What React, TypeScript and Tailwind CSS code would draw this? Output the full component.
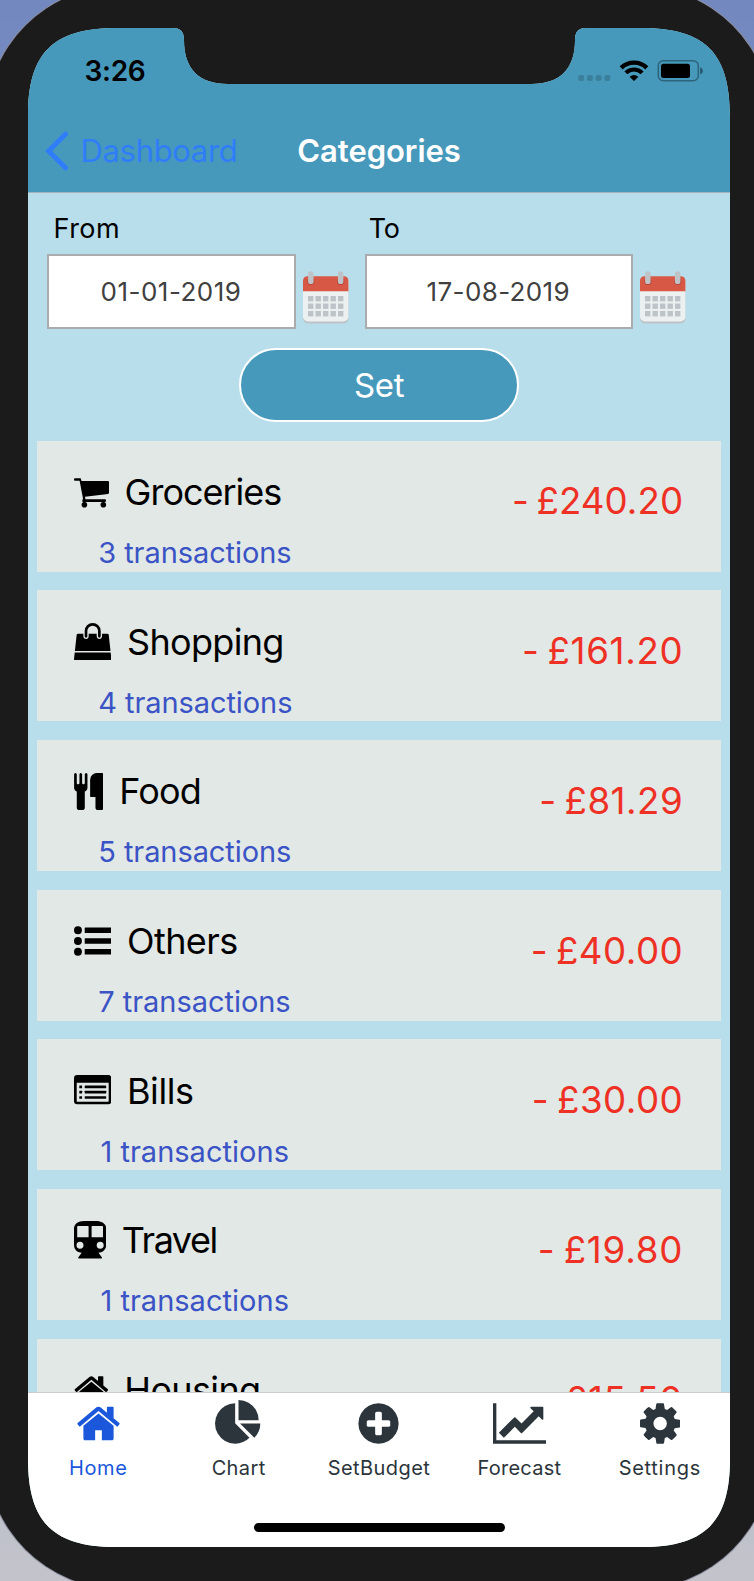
import type { ReactNode } from "react";

function CartIcon() {
  return (
    <svg className="h-[44px] w-[35px] shrink-0" viewBox="0 0 35 44" fill="currentColor">
      <path d="M1 8.3H6.6L7.6 11H34Q35 11 35 12V22.8Q35 23.8 34 23.9L11 26.7L11.4 29.3H31Q32 29.3 32 30.7Q32 32 31 32H9.4Q8.2 32 8.2 31L9 28.6L5.6 10.7H1Q0 10.7 0 9.5Q0 8.3 1 8.3Z" />
      <path d="M9.4 31h2v3h-2zM28.4 31h2v3h-2z" />
      <circle cx="10.4" cy="34.7" r="2.8" />
      <circle cx="29.3" cy="34.7" r="2.8" />
    </svg>
  );
}

function BagIcon() {
  return (
    <svg className="h-[37.4px] w-[37.4px] shrink-0" viewBox="0 0 1792 1792" fill="currentColor">
      <path d="M1757 1408l35 313q3 28-16 50-19 21-48 21h-1664q-29 0-48-21-19-22-16-50l35-313h1722zm-93-839l86 775h-1708l86-775q3-24 21-40.500t43-16.500h256v128q0 53 37.500 90.500t90.500 37.500 90.500-37.500 37.500-90.500v-128h384v128q0 53 37.500 90.500t90.500 37.500 90.500-37.500 37.500-90.500v-128h256q25 0 43 16.500t21 40.500zm-384-185v256q0 26-19 45t-45 19-45-19-19-45v-256q0-106-75-181t-181-75-181 75-75 181v256q0 26-19 45t-45 19-45-19-19-45v-256q0-159 112.500-271.500t271.500-112.500 271.500 112.500 112.500 271.500z" />
    </svg>
  );
}

function CutleryIcon() {
  return (
    <svg className="h-[37.4px] w-[29.6px] shrink-0" viewBox="192 64 1408 1792" fill="currentColor">
      <path d="M832 128v640q0 61-35.500 111t-92.500 70v779q0 52-38 90t-90 38h-128q-52 0-90-38t-38-90v-779q-57-20-92.500-70t-35.500-111v-640q0-26 19-45t45-19 45 19 19 45v416q0 26 19 45t45 19 45-19 19-45v-416q0-26 19-45t45-19 45 19 19 45v416q0 26 19 45t45 19 45-19 19-45v-416q0-26 19-45t45-19 45 19 19 45zm768 0v1600q0 52-38 90t-90 38h-128q-52 0-90-38t-38-90v-512h-224q-13 0-22.500-9.500t-9.500-22.500v-800q0-132 94-226t226-94h256q26 0 45 19t19 45z" />
    </svg>
  );
}

function ListIcon() {
  return (
    <svg className="h-[44px] w-[37.4px] shrink-0" viewBox="0 0 37.4 44" fill="currentColor">
      {[11.3, 22, 32.7].map((y) => (
        <g key={y}>
          <circle cx="3.95" cy={y} r="3.95" />
          <rect x="10.7" y={y - 2.8} width="26.7" height="5.6" rx="0.6" />
        </g>
      ))}
    </svg>
  );
}

function BillsIcon() {
  return (
    <svg className="h-[44px] w-[37.4px] shrink-0" viewBox="0 0 37.4 44" fill="currentColor">
      <path
        fillRule="evenodd"
        d="M3.3 6H34.1Q37.4 6 37.4 9.3V32Q37.4 35.3 34.1 35.3H3.3Q0 35.3 0 32V9.3Q0 6 3.3 6ZM2.7 13.7V32Q2.7 32.7 3.4 32.7H34Q34.7 32.7 34.7 32V13.7Z"
      />
      {[17.8, 23.1, 28.5].map((y) => (
        <g key={y}>
          <rect x="5.3" y={y - 1.35} width="2.8" height="2.7" rx="0.5" />
          <rect x="10.7" y={y - 1.35} width="21.5" height="2.7" rx="0.5" />
        </g>
      ))}
    </svg>
  );
}

function TrainIcon() {
  return (
    <svg className="h-[44px] w-[32.2px] shrink-0" viewBox="0 0 32.2 44" fill="currentColor">
      <path
        fillRule="evenodd"
        d="M10 3H22.2C28 3 32.2 6 32.2 10.5V27C32.2 31.5 29 34.5 24.5 34.8L28 39.4Q28.3 40.6 27.2 40.6H5Q3.9 40.6 4.2 39.4L7.7 34.8C3.2 34.5 0 31.5 0 27V10.5C0 6 4.2 3 10 3ZM3.8 8Q3.2 8 3.2 8.6V18.7Q3.2 19.3 3.8 19.3H14Q14.6 19.3 14.6 18.7V8.6Q14.6 8 14 8ZM18.2 8Q17.6 8 17.6 8.6V18.7Q17.6 19.3 18.2 19.3H28.4Q29 19.3 29 18.7V8.6Q29 8 28.4 8ZM6 23.8A3.5 3.5 0 1 0 6 30.8A3.5 3.5 0 1 0 6 23.8ZM26.2 23.8A3.5 3.5 0 1 0 26.2 30.8A3.5 3.5 0 1 0 26.2 23.8Z"
      />
    </svg>
  );
}

const HOME_PATH =
  "M1472 992v480q0 26-19 45t-45 19h-384v-384h-256v384h-384q-26 0-45-19t-19-45v-480q0-1 .5-3t.5-3l575-474 575 474q1 2 1 6zm223-69l-62 74q-8 9-21 11h-3q-13 0-21-7l-692-577-692 577q-12 8-24 7-13-2-21-11l-62-74q-8-10-7-23.500t11-21.500l719-599q32-26 76-26t76 26l244 204v-195q0-14 9-23t23-9h192q14 0 23 9t9 23v408l219 182q10 8 11 21.500t-7 23.500z";
const PIE_PATH =
  "M768 890l546 546q-106 108-247.500 168t-298.500 60q-209 0-385.500-103t-279.500-279.500-103-385.500 103-385.500 279.500-279.500 385.500-103v762zm187 6h773q0 157-60 298.500t-168 247.500zm709-128h-768v-768q209 0 385.500 103t279.500 279.500 103 385.500z";
const PLUS_PATH =
  "M1344 960v-128q0-26-19-45t-45-19h-256v-256q0-26-19-45t-45-19h-128q-26 0-45 19t-19 45v256h-256q-26 0-45 19t-19 45v128q0 26 19 45t45 19h256v256q0 26 19 45t45 19h128q26 0 45-19t19-45v-256h256q26 0 45-19t19-45zm320-64q0 209-103 385.500t-279.500 279.500-385.500 103-385.500-103-279.500-279.500-103-385.500 103-385.500 279.500-279.500 385.500-103 385.500 103 279.500 279.500 103 385.500z";
const LINE_PATH =
  "M2048 1536v128h-2048v-1536h128v1408h1920zm-128-1248v435q0 21-19.500 29.500t-35.500-7.500l-121-121-633 633q-10 10-23 10t-23-10l-233-233-416 416-192-192 585-585q10-10 23-10t23 10l233 233 464-464-121-121q-16-16-7.500-35.500t29.500-19.500h435q14 0 23 9t9 23z";
const COG_PATH =
  "M1024 896q0-106-75-181t-181-75-181 75-75 181 75 181 181 75 181-75 75-181zm512-109v222q0 12-8 23t-20 13l-185 28q-19 54-39 91 35 50 107 138 10 12 10 25t-9 23q-27 37-99 108t-94 71q-12 0-26-9l-138-108q-44 23-91 38-16 136-29 186-7 28-36 28h-222q-14 0-24.500-8.500t-11.500-21.500l-28-184q-49-16-90-37l-141 107q-10 9-25 9-14 0-25-11-126-114-165-168-7-10-7-23 0-12 8-23 15-21 51-66.500t54-70.500q-27-50-41-99l-183-27q-13-2-21-12.500t-8-23.500v-222q0-12 8-23t19-13l186-28q14-46 39-92-40-57-107-138-10-12-10-24 0-10 9-23 26-36 98.500-107.500t94.500-71.500q13 0 26 10l138 107q44-23 91-38 16-136 29-186 7-28 36-28h222q14 0 24.500 8.500t11.500 21.500l28 184q49 16 90 37l142-107q9-9 24-9 13 0 25 10 129 119 165 170 7 8 7 22 0 12-8 23-15 21-51 66.500t-54 70.500q26 50 41 98l183 28q13 2 21 12.500t8 23.500z";

function HouseIcon() {
  return (
    <svg className="h-[37.4px] w-[34.7px] shrink-0" viewBox="64 0 1664 1792" fill="currentColor">
      <path d={HOME_PATH} />
    </svg>
  );
}

function CalendarIcon() {
  return (
    <svg className="h-[53px] w-[46px]" viewBox="0 0 46 53">
      <rect x="0" y="9" width="45.4" height="43.5" rx="5" fill="#bdc3c7" />
      <rect x="0" y="7" width="45.4" height="43.5" rx="5" fill="#ecf0f1" />
      <path d="M0 20.3V10Q0 5.3 4.7 5.3H40.7Q45.4 5.3 45.4 10V20.3Z" fill="#d75945" />
      <circle cx="8" cy="10.5" r="3.6" fill="#b84436" />
      <circle cx="37.7" cy="10.5" r="3.6" fill="#b84436" />
      <rect x="5.1" y="0.3" width="5.5" height="12.8" rx="2.7" fill="#bdc3c7" />
      <rect x="34.9" y="0.3" width="5.5" height="12.8" rx="2.7" fill="#bdc3c7" />
      {[25, 32.5, 40].map((y) =>
        [5, 12.5, 20, 27.5, 35].map((x) => (
          <rect key={`${x}-${y}`} x={x} y={y} width="5.4" height="5.4" fill="#bdc3c7" />
        )),
      )}
    </svg>
  );
}

function StatusIcons() {
  return (
    <svg className="h-[22px] w-[126px]" viewBox="0 0 126 22">
      {[0.3, 9, 17.7, 26.5].map((x) => (
        <rect key={x} x={x} y="15" width="5.8" height="6" rx="1.8" fill="#3a7f9b" />
      ))}
      <g fill="none" stroke="#000">
        <path d="M43.2 7.9A18.2 18.2 0 0 1 68.8 7.9" strokeWidth="4.4" />
        <path d="M47.9 12.9A11.3 11.3 0 0 1 64.1 12.9" strokeWidth="4.2" />
      </g>
      <path d="M51.6 16.8Q56 13 60.4 16.8L56.6 20.5Q56 21 55.4 20.5Z" />
      <rect x="80.3" y="0.8" width="40" height="20" rx="5" fill="none" stroke="#2d647b" strokeWidth="1.5" />
      <rect x="83" y="3.8" width="29" height="14.2" rx="2.5" />
      <path d="M122.2 7.2C125.6 8.7 125.6 13 122.2 14.5Z" fill="#25546a" />
    </svg>
  );
}

type Category = {
  name: string;
  nameStyle: string;
  count?: number;
  countStyle?: string;
  amount: string;
  amountStyle: string;
  icon: ReactNode;
};

const categories: Category[] = [
  { name: "Groceries", nameStyle: "tracking-[-1.01px]", count: 3, countStyle: "pl-[24.7px] tracking-[-0.08px]", amount: "- £240.20", amountStyle: "tracking-[0.08px]", icon: <CartIcon /> },
  { name: "Shopping", nameStyle: "tracking-[-0.68px]", count: 4, countStyle: "pl-[24.7px] tracking-[-0.08px]", amount: "- £161.20", amountStyle: "tracking-[0.65px]", icon: <BagIcon /> },
  { name: "Food", nameStyle: "tracking-[-0.8px]", count: 5, countStyle: "pl-[24.7px] tracking-[-0.08px]", amount: "- £81.29", amountStyle: "tracking-[0.5px]", icon: <CutleryIcon /> },
  { name: "Others", nameStyle: "tracking-[-0.57px]", count: 7, countStyle: "pl-[24.7px] tracking-[-0.04px]", amount: "- £40.00", amountStyle: "tracking-[0.5px]", icon: <ListIcon /> },
  { name: "Bills", nameStyle: "tracking-[-0.43px]", count: 1, countStyle: "pl-[26.8px] tracking-[0.02px]", amount: "- £30.00", amountStyle: "tracking-[0.5px]", icon: <BillsIcon /> },
  { name: "Travel", nameStyle: "tracking-[-1.45px]", count: 1, countStyle: "pl-[26.8px] tracking-[0.02px]", amount: "- £19.80", amountStyle: "tracking-[0.8px]", icon: <TrainIcon /> },
  { name: "Housing", nameStyle: "tracking-[-0.65px]", amount: "- £15.50", amountStyle: "tracking-[0.7px]", icon: <HouseIcon /> },
];

function CategoryCard({ item }: { item: Category }) {
  return (
    <li className="flex h-[131px] shrink-0 items-start justify-between bg-[#e2e8e5] pr-[37.5px] pl-[36.3px]">
      <div className="pt-[29.2px]">
        <div className="flex h-[44px] items-center gap-[16px] text-black">
          {item.icon}
          <h2 className={`text-[36px] leading-[44px] ${item.nameStyle}`}>{item.name}</h2>
        </div>
        {item.count !== undefined && (
          <p className={`mt-[21.1px] text-[29px] leading-[36px] text-[#3a53c5] ${item.countStyle}`}>
            {item.count} transactions
          </p>
        )}
      </div>
      <span className={`mt-[38.8px] text-[36.7px] leading-[44px] [word-spacing:-3px] text-[#ee3124] ${item.amountStyle}`}>{item.amount}</span>
    </li>
  );
}

type DateFieldProps = { label: string; value: string; labelStyle: string; inputStyle: string; valueStyle: string };

function DateField({ label, value, labelStyle, inputStyle, valueStyle }: DateFieldProps) {
  return (
    <div>
      <div className={`leading-[32px] text-black ${labelStyle}`}>{label}</div>
      <div className="mt-[9.3px] flex items-start">
        <div className={`flex h-[75px] items-center justify-center border-2 border-[#a9abac] bg-white text-[26px] text-[#404040] ${inputStyle}`}>
          <span className={valueStyle}>{value}</span>
        </div>
        <div className="mt-[17.3px] ml-[7.3px]">
          <CalendarIcon />
        </div>
      </div>
    </div>
  );
}

const tabs = [
  { label: "Home", path: HOME_PATH, box: "0 0 1792 1792", size: "w-[47px]", color: "text-[#1a57db]", track: "tracking-[0.64px]" },
  { label: "Chart", path: PIE_PATH, box: "0 0 1792 1792", size: "w-[47px]", color: "text-[#2b353b]", track: "tracking-[0.37px]" },
  { label: "SetBudget", path: PLUS_PATH, box: "0 0 1792 1792", size: "w-[47px]", color: "text-[#2b353b]", track: "tracking-[0.45px]" },
  { label: "Forecast", path: LINE_PATH, box: "0 0 2048 1792", size: "w-[53.7px]", color: "text-[#2b353b]", track: "tracking-[0.25px]" },
  { label: "Settings", path: COG_PATH, box: "0 0 1536 1792", size: "w-[40.3px]", color: "text-[#2b353b]", track: "tracking-[0.71px]" },
];

export default function App() {
  return (
    <main className="h-[1581px] w-[754px] overflow-hidden bg-linear-to-b from-[#7288bf] via-[#8f9dc4] to-[#c3c4cb] font-['Inter',sans-serif]">
      <div className="-mt-[14px] -ml-[14px] h-[1603px] w-[786px] rounded-[135px] bg-[#1b1b1b] p-[42px] shadow-[0_0_0_1px_#8a8c9d]">
        <div className="flex h-[1519px] w-[702px] flex-col bg-[#b8deeb] [clip-path:path('M0_88C0_25_25_0_88_0L145_0C153_0_156_4_156_12C156_40_170_56_200_56L503_56C533_56_547_40_547_12C547_4_550_0_558_0L614_0C677_0_702_25_702_88L702_1431C702_1494_677_1519_614_1519L88_1519C25_1519_0_1494_0_1431Z')]">
          <header className="h-[165px] shrink-0 border-b border-[#a3b4bc] bg-[#4799bb]">
            <div className="flex h-[82px] items-start justify-between pr-[26px] pl-[56.5px]">
              <span className="mt-[26px] text-[28px] leading-[34px] font-semibold tracking-[-0.3px] text-black">3:26</span>
              <div className="mt-[32px]">
                <StatusIcons />
              </div>
            </div>
            <nav className="grid h-[82px] grid-cols-[1fr_auto_1fr] items-center text-[31px] leading-[38px]">
              <a className="flex items-center pl-[17px] text-[#2f7df8]">
                <svg className="h-[40px] w-[23px]" viewBox="0 0 23 40" fill="none" stroke="currentColor" strokeWidth="5" strokeLinecap="round">
                  <path d="M20.5 3.2L3.6 20L20.5 36.8" />
                </svg>
                <span className="ml-[12.5px] tracking-[-0.33px]">Dashboard</span>
              </a>
              <h1 className="font-semibold tracking-[-0.06px] text-white">Categories</h1>
              <span />
            </nav>
          </header>

          <section className="flex min-h-0 flex-1 flex-col overflow-hidden pt-[19.7px]">
            <div className="flex pl-[19px]">
              <div className="w-[318.3px]">
                <DateField label="From" value="01-01-2019" labelStyle="pl-[6.5px] text-[27px] tracking-[0.5px]" inputStyle="w-[249px]" valueStyle="mr-[1px] tracking-[0.5px]" />
              </div>
              <DateField label="To" value="17-08-2019" labelStyle="pl-[3.5px] text-[27px] tracking-[-0.3px]" inputStyle="w-[267.5px]" valueStyle="mr-[1.5px] tracking-[0.37px]" />
            </div>
            <button className="mt-[19px] ml-[211.3px] h-[74px] w-[279.7px] shrink-0 rounded-full border-2 border-white bg-[#4799bb] text-[33px] leading-[40px] tracking-[-0.3px] text-white">
              Set
            </button>
            <ul className="mt-[18.7px] flex flex-col gap-[18.7px] px-[9.3px]">
              {categories.map((item) => (
                <CategoryCard key={item.name} item={item} />
              ))}
            </ul>
          </section>

          <footer className="flex h-[155.5px] shrink-0 flex-col items-center border-t border-[#c9cccd] bg-white">
            <div className="grid w-full grid-cols-5 pt-[7.5px]">
              {tabs.map((tab) => (
                <a key={tab.label} className={`flex flex-col items-center ${tab.color}`}>
                  <svg className={`h-[47px] ${tab.size}`} viewBox={tab.box} fill="currentColor">
                    <path d={tab.path} />
                  </svg>
                  <span className={`mt-[8.5px] text-[20px] leading-[24px] ${tab.track}`}>{tab.label}</span>
                </a>
              ))}
            </div>
            <div className="mt-[43px] h-[9.5px] w-[251px] rounded-full bg-black" />
          </footer>
        </div>
      </div>
    </main>
  );
}
